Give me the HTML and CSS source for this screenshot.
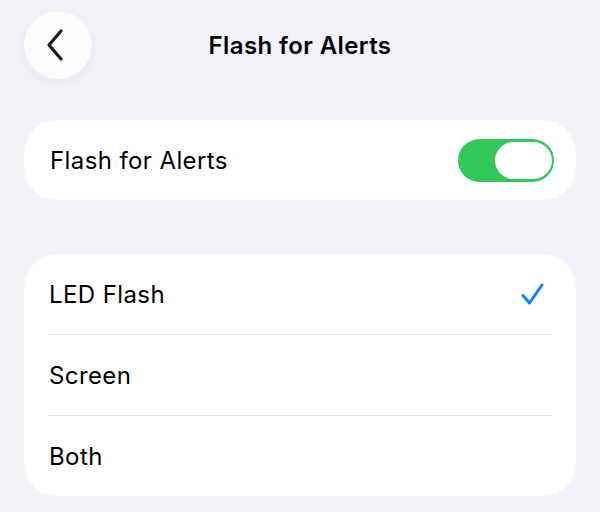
FILE: index.html
```html
<!DOCTYPE html>
<html lang="en">
<head>
    <meta charset="UTF-8">
    <meta name="viewport" content="width=device-width, initial-scale=1.0">
    <link rel="stylesheet" href="styles.css">
    <title>Flash for Alerts</title>
</head>
<body>

    <header class="nav">
        <button class="back" aria-label="Back">
            <svg width="24" height="34" viewBox="0 0 24 34">
                <path d="M17 3 L5 17 L17 31" fill="none" stroke="#1c1c1e" stroke-width="3.2" stroke-linecap="round" stroke-linejoin="round"/>
            </svg>
        </button>
        <h1 class="title">Flash for Alerts</h1>
        <span></span>
    </header>

    <section class="card">
        <div class="row">
            <span class="label">Flash for Alerts</span>
            <div class="toggle on"><div class="knob"></div></div>
        </div>
    </section>

    <section class="card list">
        <div class="row">
            <span class="label">LED Flash</span>
            <svg class="check" width="23" height="23" viewBox="0 0 23 23">
                <path d="M2 12.5 L8.5 20 L21 2" fill="none" stroke="#0a84ff" stroke-width="3" stroke-linecap="round" stroke-linejoin="round"/>
            </svg>
        </div>
        <hr class="sep">
        <div class="row">
            <span class="label">Screen</span>
        </div>
        <hr class="sep">
        <div class="row">
            <span class="label">Both</span>
        </div>
    </section>

</body>
</html>
```

FILE: styles.css
```css
* {
    box-sizing: border-box;
}

body {
    font-family: 'Inter', 'Noto Sans', sans-serif;
    background-color: #f2f2f7;
    color: #000;
    margin: 0;
    padding: 0 24px;
}

.nav {
    display: grid;
    grid-template-columns: 68px 1fr 68px;
    align-items: center;
    padding-top: 11px;
}

.back {
    width: 68px;
    height: 68px;
    border: none;
    border-radius: 50%;
    background-color: #fbfbfd;
    box-shadow: 0 4px 18px rgba(0, 0, 0, 0.06);
    display: flex;
    align-items: center;
    justify-content: center;
    padding: 0 4px 0 0;
    cursor: pointer;
}

.title {
    margin: 0;
    text-align: center;
    font-size: 24px;
    font-weight: 600;
    letter-spacing: 0.4px;
}

.card {
    background-color: #fff;
    border-radius: 34px;
    margin-top: 41px;
}

.card.list {
    margin-top: 54px;
}

.row {
    height: 80px;
    display: flex;
    align-items: center;
    justify-content: space-between;
    padding: 1px 22px 0 26px;
}

.list .row {
    padding: 0 32px 0 25px;
}

.sep {
    margin: 0 25px;
    border: none;
    border-top: 1px solid #e3e3e8;
}

.label {
    font-size: 24px;
    letter-spacing: 0.4px;
}

.toggle {
    width: 96px;
    height: 43px;
    border-radius: 22px;
    background-color: #34c759;
    position: relative;
}

.knob {
    position: absolute;
    top: 3px;
    right: 2px;
    width: 57px;
    height: 37px;
    border-radius: 19px;
    background-color: #fff;
}
```
